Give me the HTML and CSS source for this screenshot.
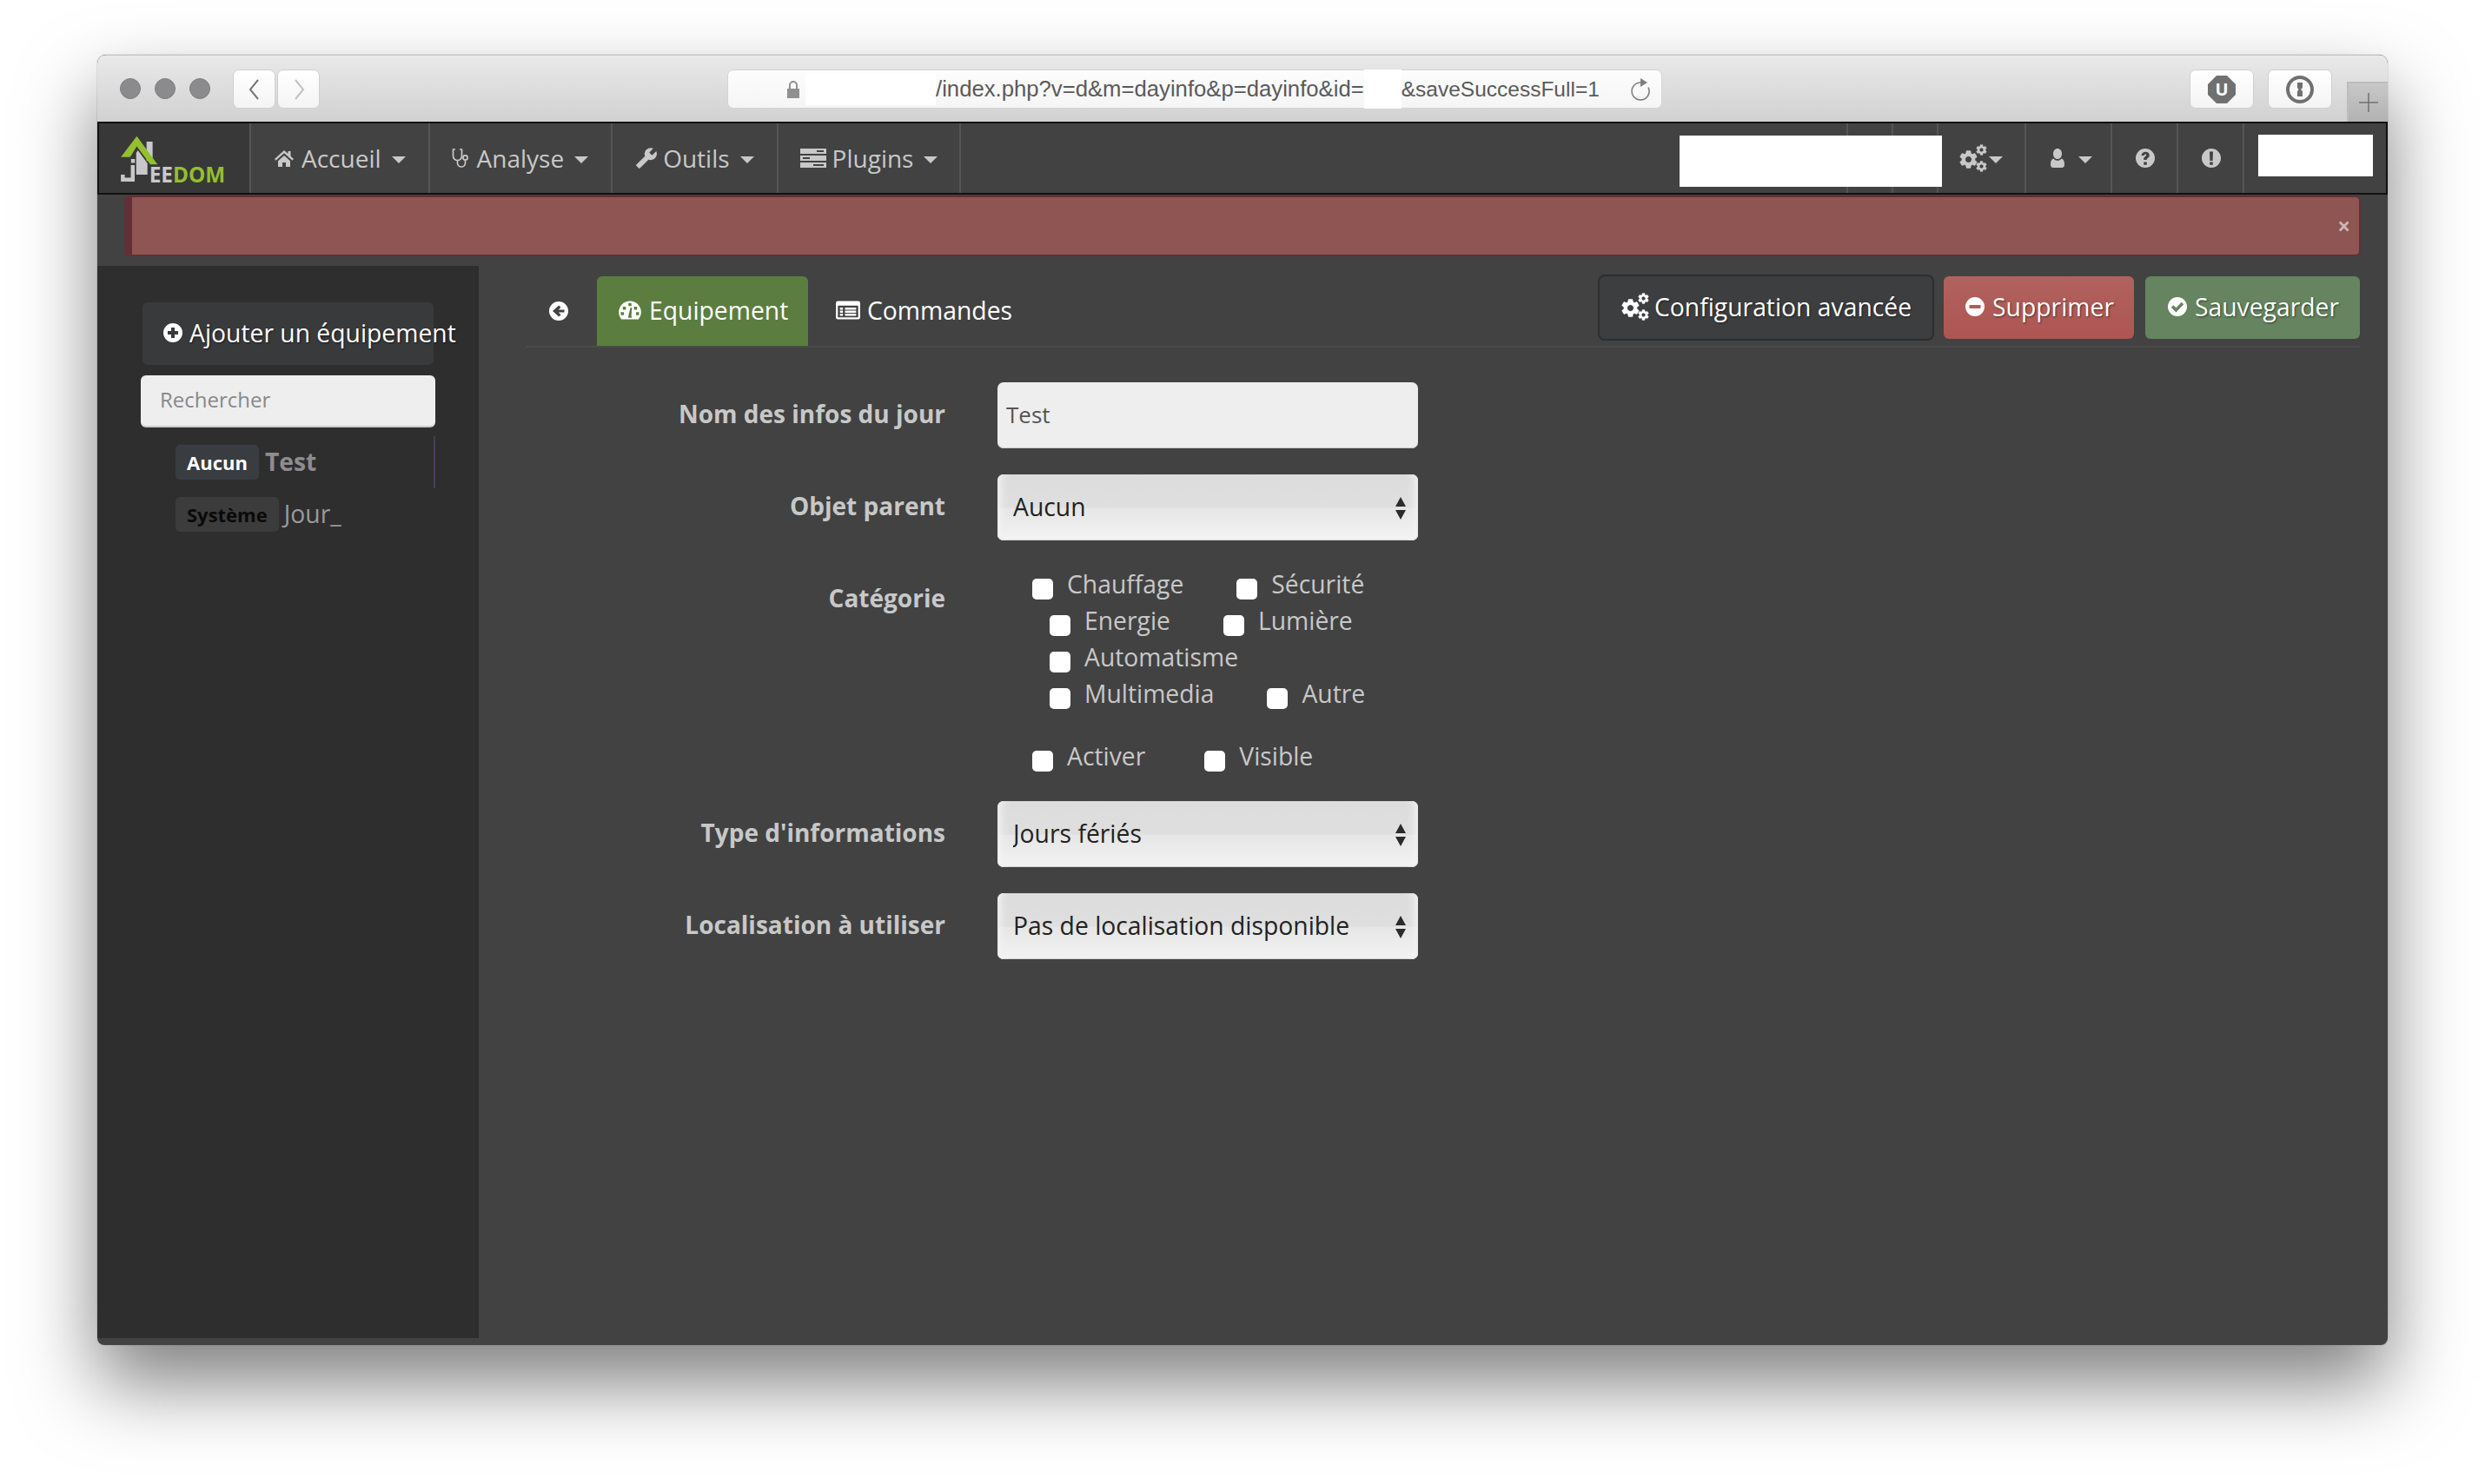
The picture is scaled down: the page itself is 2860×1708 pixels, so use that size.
FILE: index.html
```html
<!DOCTYPE html>
<html lang="en">
<head>
  <meta charset="UTF-8">
  <title>Jeedom - Infos du jour</title>
  <link rel="stylesheet" href="styles.css">
</head>
<body>

  <!-- icon set -->
  <svg class="sprite" xmlns="http://www.w3.org/2000/svg">
    <defs>
      <symbol id="i-gear" viewBox="0 0 24 24"><path d="M19.14 12.94c.04-.3.06-.61.06-.94 0-.32-.02-.64-.07-.94l2.03-1.58c.18-.14.23-.41.12-.61l-1.92-3.32c-.12-.22-.37-.29-.59-.22l-2.39.96c-.5-.38-1.03-.7-1.62-.94l-.36-2.54c-.04-.24-.24-.41-.48-.41h-3.84c-.24 0-.43.17-.47.41l-.36 2.54c-.59.24-1.13.57-1.62.94l-2.39-.96c-.22-.08-.47 0-.59.22L2.74 8.87c-.12.21-.08.47.12.61l2.03 1.58c-.05.3-.09.63-.09.94s.02.64.07.94l-2.03 1.58c-.18.14-.23.41-.12.61l1.92 3.32c.12.22.37.29.59.22l2.39-.96c.5.38 1.03.7 1.62.94l.36 2.54c.05.24.24.41.48.41h3.84c.24 0 .44-.17.47-.41l.36-2.54c.59-.24 1.13-.56 1.62-.94l2.39.96c.22.08.47 0 .59-.22l1.92-3.32c.12-.22.07-.47-.12-.61l-2.01-1.58zM12 15.6c-1.98 0-3.6-1.62-3.6-3.6s1.62-3.6 3.6-3.6 3.6 1.62 3.6 3.6-1.62 3.6-3.6 3.6z"/></symbol>
      <symbol id="i-gears" viewBox="0 0 32 32">
        <use href="#i-gear" x="-2" y="5" width="25" height="25"/>
        <use href="#i-gear" x="18" y="-1" width="15" height="15"/>
        <use href="#i-gear" x="18" y="18" width="15" height="15"/>
      </symbol>
      <symbol id="i-home" viewBox="0 0 24 24"><path d="M12 3 1 13l1.500 1.700L12 6.200l9.500 8.500L23 13l-3.500-3.200V4h-3v3.100z"/><path d="M5 15.200V22h5v-5h4v5h5v-6.800l-7-6.200z"/></symbol>
      <symbol id="i-stetho" viewBox="0 0 24 24"><path fill="none" stroke="currentColor" stroke-width="1.700" d="M7 2H4.500v7.500a5 5 0 0 0 10 0V2H12M9.500 14.500v3a4.500 4.500 0 0 0 9 0v-3"/><circle cx="18.500" cy="11.500" r="2.600" fill="none" stroke="currentColor" stroke-width="1.700"/></symbol>
      <symbol id="i-wrench" viewBox="0 0 24 24"><path transform="translate(24 0) scale(-1 1)" d="M22.700 19l-9.100-9.100c.9-2.300.4-5-1.500-6.900-2-2-5-2.400-7.400-1.300L9 6 6 9 1.600 4.700C.4 7.100.9 10.100 2.900 12.100c1.900 1.900 4.600 2.400 6.900 1.500l9.100 9.100c.4.4 1 .4 1.400 0l2.300-2.300c.5-.4.5-1.100.1-1.400z"/></symbol>
      <symbol id="i-tasks" viewBox="0 0 30 24"><path fill-rule="evenodd" d="M0 1h30v6H0zM19 3v2h8V3zM0 9h30v6H0zM3 11v2h8v-2zM0 17h30v6H0zM15 19v2h12v-2z"/></symbol>
      <symbol id="i-user" viewBox="0 0 24 24"><path d="M12 1c-3 0-5 2.600-5 6s2 6 5 6 5-2.600 5-6-2-6-5-6z"/><path d="M7.500 12.500C5 13 4 15.500 4 19.500c0 2.200 1.300 3.500 3 3.500h10c1.700 0 3-1.300 3-3.500 0-4-1-6.500-3.500-7-1 1.400-2.700 2.300-4.500 2.300s-3.500-.9-4.500-2.300z"/></symbol>
      <symbol id="i-question" viewBox="0 0 24 24"><path fill-rule="evenodd" d="M12 1a11 11 0 1 0 0 22 11 11 0 0 0 0-22zM10.200 16.400h3.600v3.400h-3.600zM7.500 9c.2-2.700 2.200-4.300 4.700-4.300 2.600 0 4.600 1.600 4.600 4 0 1.800-1 2.700-2.200 3.500-.7.5-.9.8-.9 1.700h-3.500c0-2 .5-2.900 1.800-3.800.8-.6 1.200-.9 1.200-1.500 0-.7-.5-1.100-1.100-1.100-.8 0-1.200.5-1.300 1.500z"/></symbol>
      <symbol id="i-exclaim" viewBox="0 0 24 24"><path fill-rule="evenodd" d="M12 1a11 11 0 1 0 0 22 11 11 0 0 0 0-22zM10 4.500h4l-.4 10.500h-3.200zM10.200 16.400h3.600v3.400h-3.600z"/></symbol>
      <symbol id="i-plus" viewBox="0 0 24 24"><path fill-rule="evenodd" d="M12 1a11 11 0 1 0 0 22 11 11 0 0 0 0-22zM10 6h4v4h4v4h-4v4h-4v-4H6v-4h4z"/></symbol>
      <symbol id="i-minus" viewBox="0 0 24 24"><path fill-rule="evenodd" d="M12 1a11 11 0 1 0 0 22 11 11 0 0 0 0-22zM5.500 10h13v4h-13z"/></symbol>
      <symbol id="i-check" viewBox="0 0 24 24"><path fill-rule="evenodd" d="M12 1a11 11 0 1 0 0 22 11 11 0 0 0 0-22zM10.500 18.500 4.800 12.800l2.600-2.600 3.100 3.100 6.100-6.600 2.600 2.500z"/></symbol>
      <symbol id="i-back" viewBox="0 0 24 24"><path fill-rule="evenodd" d="M12 1a11 11 0 1 0 0 22 11 11 0 0 0 0-22zM12.200 5.500l2.300 2.300-2.700 2.700h6.700v3h-6.700l2.700 2.700-2.300 2.300L5 12z"/></symbol>
      <symbol id="i-dash" viewBox="0 0 24 24"><path fill-rule="evenodd" d="M12 3A11 11 0 0 0 1 14c0 2.700 1 5 2.600 7h16.800c1.600-2 2.600-4.300 2.600-7A11 11 0 0 0 12 3zM10.500 5h3v3h-3zM5 8.500h3v3H5zM3 14h3v3H3zM18 14h3v3h-3zM16 8.500h3v3h-3zM10.500 17.500l2-8h1.500l-.6 8 .6 2h-4z"/></symbol>
      <symbol id="i-list" viewBox="0 0 24 24"><path fill-rule="evenodd" d="M2 3h20a2 2 0 0 1 2 2v14a2 2 0 0 1-2 2H2a2 2 0 0 1-2-2V5a2 2 0 0 1 2-2zM2 7.500V19h20V7.500zM4 9.500h3v2H4zM9 9.500h11v2H9zM4 12.500h3v2H4zM9 12.500h11v2H9zM4 15.500h3v2H4zM9 15.500h11v2H9z"/></symbol>
    </defs>
  </svg>

  <div class="window">

    <header class="titlebar">
      <div class="dots"><i></i><i></i><i></i></div>
      <div class="history">
        <span class="tb-btn"><svg viewBox="0 0 20 30"><path d="M14 4 5 15l9 11"/></svg></span>
        <span class="tb-btn is-off"><svg viewBox="0 0 20 30"><path d="M6 4l9 11-9 11"/></svg></span>
      </div>
      <div class="urlbar">
        <svg class="lock" viewBox="0 0 14 20"><path d="M0 9h14v11H0z"/><path class="lock-arc" d="M3 9V5a4 4 0 0 1 8 0v4"/></svg>
        <span class="url-mask url-mask-a"></span>
        <span class="url-text url-text-a">/index.php?v=d&amp;m=dayinfo&amp;p=dayinfo&amp;id=</span>
        <span class="url-mask url-mask-b"></span>
        <span class="url-text url-text-b">&amp;saveSuccessFull=1</span>
        <svg class="reload" viewBox="0 0 24 28"><path d="M12 6A10 10 0 1 0 21 11.500"/><path class="reload-tip" d="M12 1l8 5-8 5z"/></svg>
      </div>
      <div class="ext-btns">
        <span class="ext-btn">
          <svg viewBox="0 0 32 32"><path class="ext-fill" d="M10 0h12l10 10v12L22 32H10L0 22V10z"/><text x="16" y="23" class="ublock-u">U</text></svg>
        </span>
        <span class="ext-btn">
          <svg viewBox="0 0 32 32"><circle class="ext-ring" cx="16" cy="16" r="14"/><path class="ext-fill" d="M13 8h6v6l-2 2 2 2v6h-6v-6l1.500-2-1.500-2z"/></svg>
        </span>
      </div>
      <div class="newtab"><svg viewBox="0 0 24 24"><path d="M12 1v22M1 12h22"/></svg></div>
    </header>

    <nav class="navbar">
      <a class="brand">
        <svg viewBox="114 142 174 80" class="brand-logo">
          <path fill="#c8c8cc" d="M157 176l2-3 11 15v13h-13z"/>
          <path fill="#c8c8cc" d="M169 163h7v22h-7z"/>
          <path fill="#94bf2e" d="M157.700 156.700 181.700 189.300h-8.400l-15.600-21-7.700 12.400h-10.700z"/>
          <path fill="none" stroke="#c8c8cc" stroke-width="4.500" d="M153 190v17h-11.500v-6"/>
          <path fill="#c8c8cc" d="M151 183h4.500v4.500H151z"/>
          <text x="172" y="210" class="brand-text">EE<tspan fill="#94bf2e">DOM</tspan></text>
        </svg>
      </a>
      <a class="nav-item"><svg class="ico"><use href="#i-home"/></svg>Accueil<b class="caret"></b></a>
      <a class="nav-item"><svg class="ico ico-stetho"><use href="#i-stetho"/></svg>Analyse<b class="caret"></b></a>
      <a class="nav-item"><svg class="ico ico-wrench"><use href="#i-wrench"/></svg>Outils<b class="caret"></b></a>
      <a class="nav-item nav-plugins"><svg class="ico ico-tasks"><use href="#i-tasks"/></svg>Plugins<b class="caret"></b></a>

      <div class="nav-right">
        <a class="nav-item nav-blank nav-blank-l"></a>
        <a class="nav-item nav-blank"></a>
        <a class="nav-item nav-blank"></a>
        <a class="nav-item nav-gears"><svg class="ico ico-gears"><use href="#i-gears"/></svg><b class="caret"></b></a>
        <a class="nav-item nav-user"><svg class="ico ico-user"><use href="#i-user"/></svg><b class="caret"></b></a>
        <a class="nav-item nav-round"><svg class="ico ico-round"><use href="#i-question"/></svg></a>
        <a class="nav-item nav-round"><svg class="ico ico-round"><use href="#i-exclaim"/></svg></a>
        <span class="nav-mask"></span>
      </div>
      <span class="nav-cover"></span>
    </nav>

    <div class="alert"><span class="alert-close">×</span></div>

    <div class="content">
      <aside class="sidebar">
        <a class="add-btn"><svg class="ico"><use href="#i-plus"/></svg>Ajouter un équipement</a>
        <input class="search" type="text" placeholder="Rechercher">
        <ul class="eq-list">
          <li class="eq-item is-active"><span class="badge">Aucun</span><span class="eq-name">Test</span></li>
          <li class="eq-item"><span class="badge badge-sys">Système</span><span class="eq-name eq-plain">Jour_</span></li>
        </ul>
      </aside>

      <main class="panel">
        <div class="tabs">
          <a class="back"><svg class="ico ico-back"><use href="#i-back"/></svg></a>
          <a class="tab is-active"><svg class="ico ico-tab"><use href="#i-dash"/></svg>Equipement</a>
          <a class="tab tab-next"><svg class="ico ico-tab"><use href="#i-list"/></svg>Commandes</a>
          <div class="actions">
            <a class="btn btn-dark"><svg class="ico ico-conf"><use href="#i-gears"/></svg>Configuration avancée</a>
            <a class="btn btn-red"><svg class="ico"><use href="#i-minus"/></svg>Supprimer</a>
            <a class="btn btn-green"><svg class="ico"><use href="#i-check"/></svg>Sauvegarder</a>
          </div>
        </div>

        <form class="form">
          <div class="row">
            <label class="row-label">Nom des infos du jour</label>
            <input class="field" type="text" value="Test">
          </div>
          <div class="row">
            <label class="row-label">Objet parent</label>
            <div class="select-wrap">
              <select class="select"><option>Aucun</option></select>
              <svg class="select-arrows" viewBox="0 0 14 26"><path d="M7 0l6 11H1zM7 26 1 15h12z"/></svg>
            </div>
          </div>
          <div class="row">
            <label class="row-label">Catégorie</label>
            <div class="checks">
              <div class="check-row">
                <label class="check"><input type="checkbox">Chauffage</label>
                <label class="check"><input type="checkbox">Sécurité</label>
              </div>
              <div class="check-row indent">
                <label class="check"><input type="checkbox">Energie</label>
                <label class="check"><input type="checkbox">Lumière</label>
              </div>
              <div class="check-row indent">
                <label class="check"><input type="checkbox">Automatisme</label>
              </div>
              <div class="check-row indent">
                <label class="check"><input type="checkbox">Multimedia</label>
                <label class="check"><input type="checkbox">Autre</label>
              </div>
            </div>
          </div>
          <div class="row">
            <span class="row-label row-empty"></span>
            <div class="checks">
              <div class="check-row gap-wide">
                <label class="check"><input type="checkbox">Activer</label>
                <label class="check"><input type="checkbox">Visible</label>
              </div>
            </div>
          </div>
          <div class="row">
            <label class="row-label">Type d'informations</label>
            <div class="select-wrap">
              <select class="select"><option>Jours fériés</option></select>
              <svg class="select-arrows" viewBox="0 0 14 26"><path d="M7 0l6 11H1zM7 26 1 15h12z"/></svg>
            </div>
          </div>
          <div class="row">
            <label class="row-label">Localisation à utiliser</label>
            <div class="select-wrap">
              <select class="select"><option>Pas de localisation disponible</option></select>
              <svg class="select-arrows" viewBox="0 0 14 26"><path d="M7 0l6 11H1zM7 26 1 15h12z"/></svg>
            </div>
          </div>
        </form>
      </main>
    </div>
  </div>

</body>
</html>
```

FILE: styles.css
```css
* {
  box-sizing: border-box;
}
html, body {
  margin: 0;
  background: #fff;
}
body {
  padding: 63px 112px 0;
  height: 1708px;
  overflow: hidden;
  font-family: 'Open Sans', 'Noto Sans', sans-serif;
  font-size: 28.3px;
  color: #c8c8c8;
}
.sprite {
  width: 0;
  height: 0;
  position: absolute;
}
.ico {
  width: 24px;
  height: 24px;
  fill: currentColor;
  flex: none;
  margin-right: 8px;
}

/* window + browser chrome */
.window {
  width: 2636px;
  height: 1485px;
  border-radius: 10px 10px 8px 8px;
  background: #424242;
  box-shadow: 0 44px 88px rgba(0,0,0,0.5), 0 0 0 1px rgba(0,0,0,0.08);
  display: flex;
  flex-direction: column;
  overflow: hidden;
}
.titlebar {
  height: 77px;
  flex: none;
  display: flex;
  align-items: flex-start;
  padding-top: 16px;
  position: relative;
  background: linear-gradient(#e9e9e9, #d1d1d1);
  border-top: 1px solid #c4c4c4;
}
.dots {
  display: flex;
  gap: 16px;
  padding: 10px 0 0 26px;
}
.dots i {
  width: 24px;
  height: 24px;
  border-radius: 50%;
  background: #8b8b8d;
  border: 1px solid #7e7e80;
}
.history {
  display: flex;
  gap: 2px;
  margin-left: 26px;
}
.tb-btn {
  width: 49px;
  height: 45px;
  background: linear-gradient(#fff, #f4f4f4);
  border-radius: 7px;
  border: 1px solid #d0d0d0;
  display: flex;
  align-items: center;
  justify-content: center;
}
.tb-btn svg {
  width: 20px;
  height: 30px;
  fill: none;
  stroke: #777;
  stroke-width: 2;
}
.tb-btn.is-off svg {
  stroke: #c2c2c2;
}
.urlbar {
  width: 1076px;
  height: 45px;
  margin-left: 469px;
  display: flex;
  align-items: center;
  padding-left: 68px;
  background: linear-gradient(#fdfdfd, #f5f5f5);
  border: 1px solid #d4d4d4;
  border-radius: 7px;
  font-family: 'Liberation Sans', Arial, sans-serif;
  color: #5a5a5a;
  white-space: nowrap;
}
.url-text-a {
  font-size: 25.7px;
}
.url-text-b {
  font-size: 24.5px;
}
.lock {
  width: 14px;
  height: 20px;
  fill: #909090;
  margin-right: 7px;
  flex: none;
}
.lock-arc {
  fill: none;
  stroke: #909090;
  stroke-width: 2;
}
.url-mask {
  background: #fff;
  flex: none;
}
.url-mask-a {
  width: 150px;
  height: 37px;
}
.url-mask-b {
  width: 43px;
  height: 45px;
}
.reload {
  width: 24px;
  height: 28px;
  margin-left: auto;
  margin-right: 12px;
  fill: none;
  stroke: #808080;
  stroke-width: 1.6;
}
.reload-tip {
  fill: #808080;
  stroke: none;
}
.ext-btns {
  display: flex;
  gap: 16px;
  margin-left: 607px;
}
.ext-btn {
  width: 74px;
  height: 45px;
  background: linear-gradient(#fff, #f4f4f4);
  border: 1px solid #d0d0d0;
  border-radius: 7px;
  display: flex;
  align-items: center;
  justify-content: center;
}
.ext-btn svg {
  width: 32px;
  height: 32px;
}
.ext-fill {
  fill: #707070;
}
.ext-ring {
  fill: none;
  stroke: #707070;
  stroke-width: 4;
}
.ublock-u {
  fill: #fff;
  font-family: 'Open Sans', sans-serif;
  font-weight: 700;
  font-size: 20px;
  text-anchor: middle;
}
.newtab {
  position: absolute;
  right: 0;
  bottom: 0;
  width: 47px;
  height: 46px;
  background: linear-gradient(#c8c8c8, #b2b2b2);
  border: 1px solid #bdbdbd;
  border-width: 2px 0 0 2px;
  display: flex;
  align-items: center;
  justify-content: center;
}
.newtab svg {
  width: 24px;
  height: 24px;
  stroke: #707070;
  stroke-width: 1.5;
  fill: none;
}

/* jeedom navbar */
.navbar {
  height: 84px;
  flex: none;
  display: flex;
  position: relative;
  background: #424242;
  border: 2px solid #111;
  font-size: 28px;
}
.brand {
  width: 175px;
  flex: none;
  background: #383838;
  border-right: 2px solid #555;
}
.brand-logo {
  display: block;
  width: 173px;
  height: 80px;
}
.brand-text {
  font-family: 'Open Sans', sans-serif;
  font-weight: 700;
  font-size: 24.5px;
  fill: #c8c8cc;
}
.nav-item {
  display: flex;
  align-items: center;
  padding: 0 26px;
  border-right: 2px solid #555;
  color: #c8c8c8;
  white-space: nowrap;
}
.ico-stetho {
  margin-left: -4px;
}
.ico-wrench {
  width: 26px;
  height: 26px;
  margin-right: 6px;
}
.ico-tasks {
  width: 30px;
  height: 24px;
  margin-right: 7px;
}
.nav-plugins {
  padding: 0 25px;
}
.caret {
  display: block;
  width: 0;
  height: 0;
  margin-left: 12px;
  margin-top: 4px;
  border-left: 8px solid transparent;
  border-right: 8px solid transparent;
  border-top: 8px solid #c8c8c8;
}
.nav-right {
  margin-left: auto;
  display: flex;
}
.nav-blank {
  width: 52px;
  padding: 0;
}
.nav-blank-l {
  width: 100px;
}
.nav-gears {
  width: 101px;
  padding: 0 0 0 24px;
}
.ico-gears, .ico-conf {
  stroke: currentColor;
  stroke-width: 0.5;
}
.ico-gears {
  width: 32px;
  height: 32px;
  margin-right: 0;
}
.nav-gears .caret {
  margin-left: 2px;
}
.nav-user {
  width: 99px;
  padding: 0 0 0 24px;
}
.ico-user {
  width: 24px;
  height: 32px;
  margin-right: 0;
}
.nav-round {
  width: 76px;
  padding: 0 0 0 26px;
}
.ico-round {
  width: 24px;
  height: 26px;
  margin-right: 0;
}
.nav-mask {
  width: 132px;
  height: 48px;
  margin: 13px 15px 0 16px;
  background: #fff;
}
.nav-cover {
  position: absolute;
  top: 14px;
  right: 511px;
  width: 302px;
  height: 59px;
  background: #fff;
}

/* alert */
.alert {
  height: 70px;
  flex: none;
  margin: 1px 31px 0;
  display: flex;
  align-items: center;
  justify-content: flex-end;
  padding-right: 10px;
  background: #8e5552;
  border: 2px solid #622f35;
  border-left-width: 9px;
  border-radius: 6px;
}
.alert-close {
  font-size: 26px;
  font-weight: 700;
  color: #c9b6b5;
}

/* sidebar */
.content {
  flex: 1;
  display: flex;
  margin-top: 11px;
  padding-bottom: 8px;
  min-height: 0;
}
.sidebar {
  width: 439px;
  flex: none;
  background: #2e2e2e;
  padding: 42px 50px 0;
}
.add-btn {
  display: flex;
  align-items: center;
  width: 335px;
  height: 72px;
  margin-left: 2px;
  padding: 0 0 3px 23px;
  background: #393a3c;
  border-radius: 6px;
  color: #fff;
  white-space: nowrap;
  text-shadow: 1px 1px 2px rgba(0,0,0,0.6);
}
.add-btn .ico {
  margin-right: 7px;
}
.search {
  display: block;
  width: 339px;
  height: 60px;
  margin-top: 12px;
  padding: 0 22px 3px;
  background: #eee;
  border: 0;
  border-bottom: 2px solid #ccc;
  border-radius: 6px;
  font: 24px 'Open Sans', sans-serif;
  color: #555;
}
.search::placeholder {
  color: #888;
  opacity: 1;
}
.eq-list {
  list-style: none;
  margin: 10px 0 0;
  padding: 0;
}
.eq-item {
  height: 60px;
  display: flex;
  align-items: center;
  padding-left: 40px;
  border-right: 2px solid transparent;
}
.eq-item.is-active {
  border-right-color: #473c63;
}
.badge {
  height: 40px;
  padding: 0 13px;
  display: flex;
  align-items: center;
  background: #393c41;
  border-radius: 5px;
  font-size: 22px;
  font-weight: 700;
  color: #fff;
}
.badge-sys {
  background: #3c3c3c;
  color: #0a0a0a;
}
.eq-name {
  margin-left: 7px;
  padding-bottom: 2px;
  font-weight: 700;
  color: #8f8c90;
}
.eq-plain {
  margin-left: 6px;
  font-weight: 400;
  color: #9a9a9a;
}

/* tabs + actions */
.panel {
  flex: 1;
  padding: 12px 32px 0 54px;
}
.tabs {
  display: flex;
  align-items: flex-start;
  height: 82px;
  border-bottom: 2px solid #4b4b4b;
}
.back {
  height: 80px;
  width: 82px;
  padding: 28px 0 0 26px;
  color: #fff;
}
.ico-back {
  display: block;
  margin: 0;
}
.tab {
  display: flex;
  align-items: center;
  height: 80px;
  padding: 0 24px 3px;
  color: #fff;
  border-radius: 6px 6px 0 0;
}
.tab.is-active {
  width: 243px;
  background: #5c7d40;
}
.tab-next {
  margin-left: 8px;
}
.ico-tab {
  width: 28px;
  height: 28px;
}
.actions {
  margin-left: auto;
  display: flex;
  gap: 13px;
}
.btn {
  display: flex;
  align-items: center;
  height: 72px;
  padding: 0 24px 3px;
  border-radius: 6px;
  color: #fff;
  white-space: nowrap;
  text-shadow: 1px 1px 2px rgba(0,0,0,0.5);
}
.ico-conf {
  width: 32px;
  height: 32px;
  margin-right: 6px;
}
.btn-dark {
  padding-left: 25px;
  background: #3d3e40;
  box-shadow: 0 0 0 2px #2d2e30;
}
.btn-red {
  padding-right: 23px;
  background: linear-gradient(#b1625f, #ae5552);
}
.btn-green {
  padding-left: 25px;
  background: #65845f;
}

/* form */
.form {
  display: flex;
  flex-direction: column;
  gap: 30px;
  margin-top: 40px;
}
.row {
  display: flex;
  gap: 60px;
  align-items: flex-start;
}
.row-label {
  width: 483px;
  flex: none;
  text-align: right;
  font-size: 28px;
  font-weight: 700;
  line-height: 73px;
  color: #c8c8c8;
}
.row-empty {
  line-height: 0;
}
.field, .select {
  display: block;
  width: 484px;
  height: 76px;
  border: 0;
  border-radius: 7px;
  font: 28.3px 'Open Sans', sans-serif;
  flex: none;
}
.field {
  padding: 0 10px 3px;
  background: #eee;
  color: #555;
  font-size: 26px;
  box-shadow: inset 0 -1px 0 #ccc;
}
.select-wrap {
  position: relative;
  width: 484px;
  flex: none;
}
.select {
  appearance: none;
  padding: 0 18px 3px;
  color: #222;
  background: linear-gradient(#dcdcdc, #dfdfdf 50%, #e6e6e6 52%, #f3f3f3);
  box-shadow: inset 10px 0 8px -6px #f2f2f2, inset -10px 0 8px -6px #f2f2f2, inset 0 0 0 1px #cfcfcf;
}
.select-arrows {
  position: absolute;
  right: 13px;
  top: 26px;
  width: 14px;
  height: 26px;
  fill: #2b2b2b;
}
.checks {
  display: flex;
  flex-direction: column;
  padding-left: 40px;
}
.check-row {
  display: flex;
  height: 42px;
  gap: 61px;
}
.check-row.indent {
  padding-left: 20px;
}
.gap-wide {
  gap: 68px;
}
.check {
  display: flex;
  align-items: flex-start;
  gap: 16px;
  line-height: 40px;
  color: #c8c8c8;
  white-space: nowrap;
}
.check input {
  appearance: none;
  width: 24px;
  height: 24px;
  margin: 14px 0 0;
  background: #fff;
  border-radius: 5px;
  flex: none;
}
```
